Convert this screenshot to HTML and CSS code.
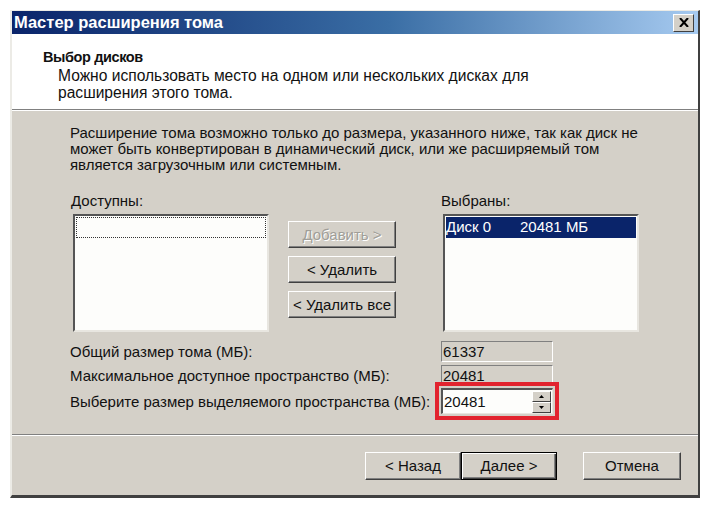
FILE: index.html
```html
<!DOCTYPE html>
<html lang="ru">
<head>
    <meta charset="UTF-8">
    <title>Мастер расширения тома</title>
    <link rel="stylesheet" href="styles.css">
</head>
<body>
    <div class="window">
        <div class="titlebar">
            <span class="title">Мастер расширения тома</span>
            <span class="close-btn">
                <svg width="10" height="9" viewBox="0 0 10 9">
                    <path d="M1 0 L9 9 M9 0 L1 9" stroke="#000" stroke-width="2"/>
                </svg>
            </span>
        </div>

        <div class="header">
            <div class="header-title">Выбор дисков</div>
            <div class="header-desc">Можно использовать место на одном или нескольких дисках для<br>расширения этого тома.</div>
        </div>
        <div class="separator"></div>

        <div class="content">
            <p class="note">Расширение тома возможно только до размера, указанного ниже, так как диск не<br>может быть конвертирован в динамический диск, или же расширяемый том<br>является загрузочным или системным.</p>

            <div class="lists">
                <div class="list-col">
                    <div class="list-label">Доступны:</div>
                    <div class="listbox">
                        <div class="list-focus"></div>
                    </div>
                </div>

                <div class="list-buttons">
                    <button class="btn btn-wide" disabled>Добавить &gt;</button>
                    <button class="btn btn-wide">&lt; Удалить</button>
                    <button class="btn btn-wide">&lt; Удалить все</button>
                </div>

                <div class="list-col">
                    <div class="list-label">Выбраны:</div>
                    <div class="listbox">
                        <div class="list-item selected"><span class="disk-name">Диск 0</span>20481 МБ</div>
                    </div>
                </div>
            </div>

            <div class="sizes">
                <div class="size-row">
                    <span class="size-label">Общий размер тома (МБ):</span>
                    <span class="field readonly">61337</span>
                </div>
                <div class="size-row">
                    <span class="size-label">Максимальное доступное пространство (МБ):</span>
                    <span class="field readonly">20481</span>
                </div>
                <div class="size-row">
                    <span class="size-label">Выберите размер выделяемого пространства (МБ):</span>
                    <span class="highlight">
                        <span class="field spin">
                            <span class="spin-value">20481</span>
                            <span class="spin-arrows">
                                <span class="spin-btn">
                                    <svg width="5" height="3" viewBox="0 0 5 3"><path d="M0 3 L5 3 L2.5 0 Z" fill="#000"/></svg>
                                </span>
                                <span class="spin-btn">
                                    <svg width="5" height="3" viewBox="0 0 5 3"><path d="M0 0 L5 0 L2.5 3 Z" fill="#000"/></svg>
                                </span>
                            </span>
                        </span>
                    </span>
                </div>
            </div>
        </div>
        <div class="separator"></div>

        <div class="footer">
            <button class="btn btn-nav">&lt; Назад</button>
            <button class="btn btn-nav default">Далее &gt;</button>
            <button class="btn btn-nav cancel">Отмена</button>
        </div>
    </div>
</body>
</html>
```

FILE: styles.css
```css
* {
    margin: 0;
    padding: 0;
    box-sizing: border-box;
}

body {
    background: white;
    font-family: 'Liberation Sans', Arial, sans-serif;
    font-size: 15px;
    color: #111;
}

.window {
    margin: 10px 0 0 10px;
    width: 690px;
    height: 488px;
    background: #d4d0c8;
    border-left: 2px solid #ecebe6;
    border-top: 1px solid #ecebe6;
    border-right: 2px solid #404040;
    border-bottom: 3px solid #404040;
    display: flex;
    flex-direction: column;
}

.titlebar {
    height: 23px;
    background: linear-gradient(90deg, #0a246a 0%, #3a6ea5 55%, #a6caf0 100%);
    display: flex;
    align-items: center;
    justify-content: space-between;
    padding: 0 4px 0 2px;
}

.title {
    color: white;
    font-weight: bold;
    font-size: 16.5px;
}

.close-btn {
    width: 21px;
    height: 18px;
    background: #d4d0c8;
    border-top: 1px solid #fff;
    border-left: 1px solid #fff;
    border-right: 1px solid #404040;
    border-bottom: 1px solid #404040;
    display: flex;
    align-items: center;
    justify-content: center;
}

.header {
    background: white;
    height: 75px;
    padding: 14px 0 0 31px;
}

.header-title {
    font-weight: bold;
    font-size: 14.5px;
    letter-spacing: -0.4px;
    line-height: 18px;
}

.header-desc {
    padding-left: 15px;
    font-size: 15.6px;
    line-height: 17px;
    margin-top: 1px;
}

.separator {
    height: 2px;
    border-top: 1px solid #808080;
    border-bottom: 1px solid #fff;
}

.content {
    flex: 1;
    padding: 14px 0 0 58px;
}

.note {
    line-height: 16px;
}

.lists {
    display: flex;
    margin-top: 20px;
}

.list-col {
    display: flex;
    flex-direction: column;
}

.list-label {
    line-height: 16px;
    margin-left: 1px;
    margin-bottom: 5px;
}

.listbox {
    width: 196px;
    height: 118px;
    background: #fdfdfb;
    border-top: 2px solid #555;
    border-left: 2px solid #555;
    border-right: 2px solid #e8e6e0;
    border-bottom: 2px solid #e8e6e0;
    margin-left: 3px;
    padding: 1px;
}

.list-focus {
    height: 21px;
    border: 1px dotted #333;
}

.list-item {
    height: 21px;
    line-height: 20px;
}

.list-item.selected {
    background: #0a246a;
    color: white;
}

.disk-name {
    display: inline-block;
    width: 74px;
}

.list-buttons {
    display: flex;
    flex-direction: column;
    gap: 8px;
    margin: 28px 44px 0 19px;
}

.btn {
    font-family: inherit;
    font-size: 15px;
    color: #111;
    background: #d4d0c8;
    border-top: 1px solid #fff;
    border-left: 1px solid #fff;
    border-right: 1px solid #404040;
    border-bottom: 1px solid #404040;
    box-shadow: inset -1px -1px 0 #808080;
}

.btn:disabled {
    color: #a09e98;
    text-shadow: 1px 1px 0 #fff;
}

.btn-wide {
    width: 108px;
    height: 27px;
}

.sizes {
    margin-top: 9px;
    display: flex;
    flex-direction: column;
    gap: 3px;
}

.size-row {
    display: flex;
    align-items: center;
}

.size-label {
    width: 371px;
    line-height: 16px;
}

.field {
    display: flex;
    align-items: center;
    width: 112px;
    height: 21px;
    border-top: 1px solid #808080;
    border-left: 1px solid #808080;
    border-right: 1px solid #fff;
    border-bottom: 1px solid #fff;
    padding-left: 1px;
}

.field.readonly {
    background: #d4d0c8;
}

.highlight {
    outline: 4px solid #e2232e;
    outline-offset: 2px;
    margin-top: -1px;
}

.field.spin {
    height: 26px;
    background: #fdfdfb;
    border-top: 2px solid #555;
    border-left: 2px solid #555;
    border-right: 1px solid #e8e6e0;
    border-bottom: 1px solid #e8e6e0;
    justify-content: space-between;
    padding-right: 1px;
}

.spin-arrows {
    display: flex;
    flex-direction: column;
}

.spin-btn {
    width: 19px;
    height: 11px;
    background: #d4d0c8;
    border-top: 1px solid #fff;
    border-left: 1px solid #fff;
    border-right: 1px solid #404040;
    border-bottom: 1px solid #404040;
    display: flex;
    align-items: center;
    justify-content: center;
}

.footer {
    height: 59px;
    display: flex;
    align-items: center;
    padding: 0 0 0 353px;
}

.btn-nav {
    width: 96px;
    height: 28px;
}

.btn-nav.default {
    border: 1px solid #000;
    box-shadow: inset 1px 1px 0 #fff, inset -1px -1px 0 #404040, inset -2px -2px 0 #808080;
}

.btn-nav.cancel {
    width: 98px;
    margin-left: 26px;
}
```
